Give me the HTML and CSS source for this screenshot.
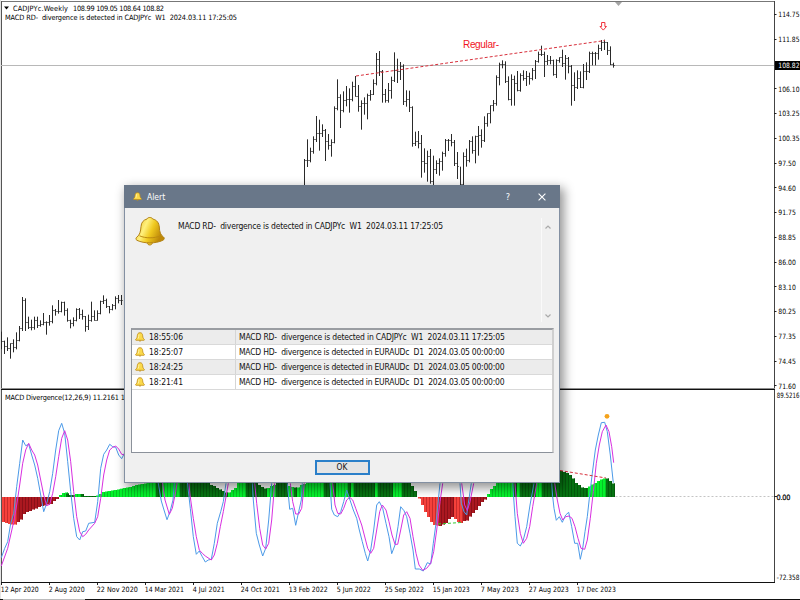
FILE: index.html
```html
<!DOCTYPE html>
<html lang="en">
<head>
<meta charset="utf-8">
<title>CADJPYc Weekly</title>
<link rel="stylesheet" href="styles.css">
</head>
<body>
<main class="terminal">
<svg class="chart" id="chart" width="800" height="600" viewBox="0 0 800 600">
  <g class="frame" shape-rendering="crispEdges">
    <rect x="0" y="0" width="1" height="600" fill="#e4e4e4"/>
    <rect x="1" y="1" width="774" height="1" fill="#777"/>
    <rect x="1" y="1" width="1" height="582" fill="#555"/>
    <rect x="774" y="1" width="1" height="582" fill="#444"/>
    <rect x="1" y="388" width="774" height="1" fill="#8f8f8f"/>
    <rect x="1" y="389" width="774" height="1" fill="#111"/>
    <rect x="1" y="582" width="774" height="1" fill="#111"/>
    <rect x="1" y="65" width="773" height="1" fill="#b8b8b8"/>
    <rect x="0" y="599" width="800" height="1" fill="#111"/>
    <rect x="3" y="599" width="82" height="1" fill="#bbb"/>
  </g>
  <path d="M615 2h7l-3.5 4z" fill="#a5a5a5"/>
  <path d="M615.500 496.500H774" stroke="#c4c4c4" stroke-dasharray="2 2"/>
  <g id="bars"></g>
  <g id="histogram"></g>
  <g id="lines"></g>
  <path class="trend" d="M356 76L605 40.500"/>
  <path class="trend" d="M560 470.500L606 478"/>
  <path d="M438 524L461 522.500" stroke="#3c3" stroke-dasharray="3 2" fill="none"/>
  <path d="M601.600 22.500h3.300v4h1.600l-3.200 3.600-3.300-3.600h1.600z" fill="#fff" stroke="#f0323c"/>
  <circle cx="607" cy="416.300" r="2.400" fill="#f5a31c"/>
  <text class="note" x="463" y="48" textLength="36">Regular-</text>
  <path d="M4 6.500h5l-2.500 3z" fill="#000"/>
  <g class="labels">
    <text x="13" y="10.500" textLength="55" xml:space="preserve">CADJPYc.Weekly</text>
    <text x="73" y="10.500" textLength="91">108.99 109.05 108.64 108.82</text>
    <text x="5" y="20.300" textLength="232" xml:space="preserve">MACD RD-  divergence is detected in CADJPYc  W1  2024.03.11 17:25:05</text>
    <text x="5" y="399.500" textLength="130">MACD Divergence(12,26,9) 11.2161 13.2</text>
    <text x="776.800" y="398" textLength="22.600" lengthAdjust="spacingAndGlyphs">89.5216</text>
    <text x="776.500" y="500" textLength="14" class="strong">0.00</text>
    <text x="776.800" y="580" textLength="22.600" lengthAdjust="spacingAndGlyphs">-72.358</text>
  </g>
  <g class="labels" id="axes"></g>
  <rect x="775" y="61" width="25" height="9" fill="#000"/>
  <text class="price" x="778.300" y="68.200" textLength="21.200" lengthAdjust="spacingAndGlyphs">108.82</text>
</svg>

<svg width="0" height="0" class="defs">
  <defs>
    <linearGradient id="gold" x1="0" x2="1" y1="0" y2=".4">
      <stop offset="0" stop-color="#e9b81b"/><stop offset=".4" stop-color="#fff07c"/><stop offset=".65" stop-color="#f0c91f"/><stop offset="1" stop-color="#bd8808"/>
    </linearGradient>
    <symbol id="bell" viewBox="0 0 30 30">
      <path d="M12.200 26.500h5.200c0 3.300-5.200 3.300-5.200 0z" fill="#efc62a" stroke="#b48312"/>
      <path d="M12 3c.7-2 5-2 5.700 0 4.300 1 6.300 4 6.600 8 .2 5 1.300 8 4.200 10 1.300 1 .8 2.600-.6 3.300-7.500 3.500-18.500 3.500-26 0-1.200-.7-1.300-2.300 0-3.200 3-2.400 3.700-5.500 4.100-10.500C6.300 6.500 8.300 4 12 3z" fill="url(#gold)" stroke="#b38214"/>
      <path d="M4.500 19.800c6 2.700 15 2.700 21 0" fill="none" stroke="#bd8a10"/>
    </symbol>
    <symbol id="bell-small" viewBox="0 0 10 10">
      <path d="M4 8.500h2c0 1.400-2 1.400-2 0z" fill="#c8920c"/>
      <path d="M5 .7C6.900.7 7.600 2 7.700 3.800 7.800 5.600 8.200 6.400 9.200 7.200c.5.600.2 1.100-.4 1.100H1.200c-.6 0-.9-.5-.4-1.100 1-.8 1.400-1.600 1.500-3.400C2.400 2 3.100.7 5 .7z" fill="#fbd94a" stroke="#bf8c16" stroke-width=".8"/>
      <path d="M4 2.500C3.700 4 3.700 5 3.200 6.500" fill="none" stroke="#fff3a8" stroke-width="1"/>
    </symbol>
  </defs>
</svg>

<section class="dialog">
  <header class="titlebar">
    <svg class="tiny-bell"><use href="#bell-small"/></svg>
    <span class="title">Alert</span>
    <span class="help">?</span>
    <svg class="close" viewBox="0 0 8 8"><path d="M.6.600l6.800 6.800M7.400.600L.6 7.400"/></svg>
  </header>
  <div class="message">
    <svg class="big-bell"><use href="#bell"/></svg>
    <p class="text lead">MACD RD-  divergence is detected in CADJPYc  W1  2024.03.11 17:25:05</p>
    <div class="scroller">
      <svg viewBox="0 0 6 4"><path d="M.5 3.500L3 1l2.500 2.500"/></svg>
      <svg viewBox="0 0 6 4"><path d="M.5.500L3 3 5.500.500"/></svg>
    </div>
  </div>
  <div class="log">
    <div class="row"><div class="time"><svg><use href="#bell-small"/></svg><span>18:55:06</span></div><div class="text wide">MACD RD-  divergence is detected in CADJPYc  W1  2024.03.11 17:25:05</div></div>
    <div class="row"><div class="time"><svg><use href="#bell-small"/></svg><span>18:25:07</span></div><div class="text">MACD HD-  divergence is detected in EURAUDc  D1  2024.03.05 00:00:00</div></div>
    <div class="row"><div class="time"><svg><use href="#bell-small"/></svg><span>18:24:25</span></div><div class="text">MACD HD-  divergence is detected in EURAUDc  D1  2024.03.05 00:00:00</div></div>
    <div class="row"><div class="time"><svg><use href="#bell-small"/></svg><span>18:21:41</span></div><div class="text">MACD HD-  divergence is detected in EURAUDc  D1  2024.03.05 00:00:00</div></div>
  </div>
  <button class="ok">OK</button>
</section>
</main>
<script src="script.js"></script>
</body>
</html>
```
FILE: styles.css
```css
* { box-sizing: border-box; }
body { margin: 0; background: #fff; font-family: "DejaVu Sans Condensed", "DejaVu Sans", sans-serif; overflow: hidden; }
.terminal { position: relative; width: 800px; height: 600px; overflow: hidden; }
.chart { display: block; }
.defs { position: absolute; }
.labels text, .price { font-family: "DejaVu Sans Condensed", "DejaVu Sans", sans-serif; font-stretch: condensed; font-size: 7.300px; fill: #000; }
.labels .strong { stroke: #000; stroke-width: .2px; }
.price { fill: #fff; }
.note { font: 10px "Liberation Sans", sans-serif; fill: #f0141e; }
.trend { fill: none; stroke: #d8303c; stroke-width: 1; stroke-dasharray: 3 2; }

.dialog { position: absolute; left: 124px; top: 185px; width: 436px; height: 298px; display: flex; flex-direction: column; background: #f0f0f0; border: 1px solid #8390a2; border-top: 0; box-shadow: 3px 4px 10px 1px rgba(0,0,0,.42); }
.titlebar { height: 23px; margin: 0 -1px; background: #697789; display: flex; flex: none; align-items: center; color: #fff; padding: 0 14px 0 9px; }
.tiny-bell { width: 9px; height: 9px; }
.title { font-size: 8.500px; font-stretch: condensed; margin-left: 5px; flex: 1; }
.help { font-size: 9px; margin-right: 28px; }
.close { width: 8px; height: 8px; fill: none; stroke: #fff; stroke-width: 1.100; }
.message { display: flex; height: 120px; flex: none; padding: 8px 0 0 10px; }
.big-bell { width: 30px; height: 30px; flex: none; }
.text, .time { font-size: 8.500px; font-stretch: condensed; line-height: 10px; white-space: pre; color: #111; letter-spacing: -.235px; }
.wide { letter-spacing: -.185px; }
.lead { margin: 5px 0 0 13px; flex: 1; letter-spacing: -.195px; }
.scroller { display: flex; flex-direction: column; justify-content: space-between; align-items: center; width: 12px; height: 104px; margin: 2px 6px 0 0; padding: 7px 0 4px; border-left: 1px solid #fafafa; }
.scroller svg { width: 6px; height: 4px; fill: none; stroke: #aaa; stroke-width: 1.200; }
.log { flex: none; height: 125px; margin: 0 5px 0 6px; background: #fff; border: 1px solid #8b919a; border-top: 2px solid #9a9da2; border-right: 2px solid #cfcfcf; }
.row { display: flex; height: 15px; border-bottom: 1px solid #d9d9d9; }
.row:nth-child(odd) { background: #ececec; }
.time { width: 104px; flex: none; display: flex; align-items: center; border-right: 1px solid #d5d5d5; padding-left: 3px; letter-spacing: -.05px; }
.time svg { width: 10px; height: 10px; margin-right: 4px; }
.row .text { padding: 2px 0 0 3px; }
.ok { align-self: center; margin: 7px 0 0; width: 55px; height: 15px; padding: 0; border: 2px solid #2a7fc9; background: #e4e4e4; color: #111; font: 8.300px/11px "DejaVu Sans Condensed", "DejaVu Sans", sans-serif; }
```
FILE: script.js
```js
const NS = 'http://www.w3.org/2000/svg';
function add(parent, tag, attrs, text) {
  const el = document.createElementNS(NS, tag);
  for (const key in attrs) el.setAttribute(key, attrs[key]);
  if (text) el.textContent = text;
  document.getElementById(parent).appendChild(el);
}

// Price series: first bar index, vertical origin, then high/low/close in thirds of a pixel.
const prices = [
  [0, 280, '155 207 185,182 222 200,172 213 205,190 236 190,178 217 203,157 208 182,138 184 145,51 153 60,55 153 127,110 147 142,119 151 142,110 149 120,110 144 135,121 140 133,99 136 128,124 164 128,105 137 125,76 130 90,87 107 93,60 101 93,65 97 68,65 107 90,85 125 122,119 145 130,112 139 122,85 124 88,84 117 103,89 119 110,108 155 140,104 150 120,65 125 108,91 122 120,91 122 100,62 103 65,46 72 62,56 84 80,78 100 88,72 91 76,49 88 55,45 70 60,45 75 60'],
  [101, 40, '357 440 360,298 381 360,323 367 335,289 341 298,228 306 280,239 332 280,253 291 270,267 363 304,282 329 316,298 350 308,199 310 205,118 211 173,163 264 211,154 217 181,138 199 178,145 218 178,125 184 138,108 170 170,135 215 199,181 269 190,172 224 190,161 238 165,150 182 163,118 165 130,39 136 58,33 108 95,90 188 163,147 188 180,129 188 150,110 176 120,37 126 90,56 129 93,66 120 80,73 195 184,151 200 178,152 216 202,199 320 310,275 318 303,273 325 310,285 413 364,325 398 370,332 425 350,327 431 425,347 435 388,361 402 370,355 407 365,335 392 340,297 350 300,297 333 300,282 319 307,300 378 370,336 417 380'],
  [153, 0, '500 555 552,457 555 470,446 500 482,420 487 425,409 461 452,407 490 410,378 467 405,388 443 420,349 426 370,340 380 340,316 370 316,300 334 310,226 317 232,188 256 192,181 205 193,184 249 245,229 301 298,223 317 238,227 317 250,213 274 270,220 275 225,211 242 235,213 258 230,218 254 235,204 241 210,180 237 185,155 188 162,137 168 163,155 231 185,165 195 182,168 193 182,179 227 223,178 234 181,172 188 172,149 201 190,165 239 175,171 220 200,195 317 255,217 303 262,211 267 235,214 264 262,192 265 215,187 240 215,155 219 160,155 196 160,156 196 160,134 179 145,120 153 127,119 150 127,126 165 150,139 195 193,188 203 196']
];
for (const [start, origin, data] of prices) {
  let last = null;
  data.split(',').forEach((row, i) => {
    const [hi, lo, close] = row.split(' ').map(v => origin + v / 3);
    const x = 1.5 + 3 * (start + i);
    add('bars', 'path', { d: `M${x} ${hi}V${lo}`, stroke: '#2a2a2a', 'stroke-width': 1 });
    let d = `M${x} ${Math.floor(close) + .5}h1.5`;
    if (last) d += `M${x} ${Math.floor(last) + .5}h-1.5`;
    add('bars', 'path', { d, stroke: '#222', 'stroke-opacity': .6 });
    last = close;
  });
}

// Histogram: [first x, colour, values above (+) or below (-) zero], one value per 3px bar.
const shade = { L: ['#04f22c', '#06c424'], D: ['#067312', '#045a0c'], r: ['#f5413b', '#c92c2c'], d: ['#ab1820', '#8a1018'] };
const rep = (n, v) => Array(n).fill(v);
const histogram = [
  [2, 'r', [-25, -26, -27, -27.5, -27.5]],
  [17, 'd', [-25, -22.5, -17, -15, -14, -12.5, -11.5, -10, -9, -8.5, -7.5, -7, -4, -2]],
  [59, 'L', [2, 4, 4.5]], [66, 'D', [3.5, 2, 2]], [75, 'L', [3, 3]], [81, 'D', [3, 1, 1, 1, 1]],
  [96, 'L', [1.5, 3, 5, 5.5, 6, 6.5, 7, 7.5, 8.3, 9, 9.5, 10, 11, 12, 12.5, 13, 13.5, 14, 14, 14]],
  [156, 'D', [14, 14]], [162, 'L', rep(6, 14)], [180, 'D', [...rep(10, 14), 12, 11, 9, 7.5, 6, 4.5]],
  [228, 'L', [4.5, 7, 9, 14, 14, 14]], [246, 'D', [14, 14, 14, 14, 12, 10, 8.5]], [267, 'L', [9, 11, 12]],
  [276, 'D', rep(4, 14)], [288, 'L', [11, 10]], [294, 'D', [9.5]], [297, 'L', [9.5, 12, 13, ...rep(9, 14)]],
  [324, 'D', rep(2, 14)], [330, 'L', rep(1, 14)], [333, 'D', [14]], [336, 'L', rep(4, 14)], [348, 'D', [14]],
  [351, 'L', [14]], [354, 'D', rep(7, 14)], [375, 'L', [14]], [378, 'D', rep(5, 14)], [393, 'L', rep(3, 14)],
  [402, 'D', [14, 14, 14, 11, 6]],
  [418, 'r', [-1.5, -8, -15, -20, -25, -28, -28.5]], [439, 'd', [-29, -27.5, -26, -22, -20]], [454, 'r', [-22, -25, -26]],
  [463, 'd', [-24, -23.5, -19.5, -16, -13, -9, -5, -2.5]],
  [487, 'L', [3, 8, 11, ...rep(9, 14)]], [514, 'D', [14]], [517, 'L', [14]], [520, 'D', rep(6, 14)],
  [536, 'L', rep(2, 14)], [542, 'D', [...rep(5, 14), 26, 26, 25, 24, 22, 18.5, 14, 12, 9.5, 9, 9]],
  [588, 'L', [10.5, 12.5, 14, 16, 17.5, 18.5]], [606, 'D', [18.5, 16, 13.5]]
];
for (const [x0, tone, values] of histogram) {
  values.forEach((v, i) => {
    const x = x0 + 3 * i, y = v > 0 ? 497 - v : 497, height = Math.abs(v);
    add('histogram', 'rect', { x, y, width: 3, height, fill: shade[tone][0] });
    add('histogram', 'rect', { x: x + 2, y, width: 1, height, fill: shade[tone][1] });
  });
}

// Oscillator and signal: origin x/y, then points in thirds of a pixel.
const blue = '#4b9ae8', pink = '#d82fe0';
const curves = [
  [0, 385, blue, '4,518 14,490 23,470 32,415 41,385 50,305 59,235 68,165 77,182 86,178 95,210 104,240 113,280 122,330 131,380 140,355 149,320 158,265 167,195 176,137 185,115 194,145 203,230 212,320 221,400 230,455 239,465 248,440 257,438 266,415 284,412 293,350 302,250 311,208 320,195 329,178 338,185 347,187 356,210 365,221 374,203'],
  [0, 385, pink, '4,543 23,490 41,410 50,360 59,300 68,235 77,195 86,175 95,195 104,210 113,240 122,285 131,330 140,362 149,358 158,325 167,275 176,215 185,160 194,137 203,165 212,230 221,320 230,395 239,440 248,455 257,448 266,435 284,415 293,395 302,340 311,270 320,225 329,195 338,187 347,183 356,192 365,208 374,210'],
  [0, 385, blue, '474,290 484,348 492,375 501,404 510,380 519,345 523,290'],
  [0, 385, pink, '487,290 495,345 508,388 517,370 527,320 532,290'],
  [0, 385, blue, '562,290 571,370 580,455 589,508'],
  [190, 440, blue, '19,343 28,333 37,350 46,366 55,360 64,358 73,310 82,250 92,215 100,185 108,130'],
  [190, 440, pink, '-3,130 0,165 10,235 19,290 28,330 37,340 46,348 64,360 73,345 82,310 91,260 100,215 108,170 115,130'],
  [190, 440, blue, '187,130 190,180 199,280 208,315 218,348 227,325 236,240 245,130'],
  [190, 440, pink, '194,130 200,190 209,265 218,315 227,327 236,310 245,240 254,130'],
  [190, 440, blue, '292,130 299,208 308,205 317,256 326,215 334,180 337,130'],
  [190, 440, pink, '301,130 308,185 317,222 326,222 335,205 343,130'],
  [190, 440, blue, '420,130 425,208 433,225 443,230 452,215 461,185 470,150 480,180 490,210 500,235 508,270 517,305 526,340 533,363 542,330 551,270 560,195 568,185 578,205 588,250 597,290 605,341 615,315 624,260 632,200 642,212 650,230 660,280 669,330 676,387 688,387 700,393 712,368 722,372 730,310 738,250 750,130'],
  [190, 440, pink, '428,130 435,195 443,220 452,222 461,205 470,180 479,172 488,180 497,205 515,255 533,325 542,340 551,325 560,270 569,215 577,195 588,210 597,245 606,285 615,313 623,313 632,270 641,225 650,215 660,235 669,290 678,340 687,375 698,391 710,385 722,370 731,335 740,270 750,185 758,130'],
  [380, 440, blue, '240,130 244,190 252,215 260,225 265,190 274,130'],
  [380, 440, pink, '245,130 254,195 262,212 270,185 281,130'],
  [380, 440, blue, '398,130 405,230 412,310 421,318 430,300 440,260 450,195 462,130'],
  [380, 440, pink, '405,130 412,220 421,280 430,310 440,295 449,260 458,200 470,130'],
  [550, 380, blue, '5,310 8,350 12,385 19,421 28,410 37,427 47,405 56,397 65,440 74,490 83,490 91,538 98,505 105,455 112,410 119,345 127,280 136,210 145,165 154,128 164,127 172,155 181,225 190,308'],
  [550, 380, pink, '14,310 22,360 30,400 38,420 47,410 57,408 66,415 75,440 84,475 93,505 104,508 112,480 121,415 130,335 139,250 148,195 157,155 168,135 177,155 185,200 191,248']
];
for (const [ox, oy, stroke, data] of curves) {
  const points = data.split(' ').map(p => {
    const [x, y] = p.split(',');
    return `${(ox + x / 3).toFixed(1)},${(oy + y / 3).toFixed(1)}`;
  }).join(' ');
  add('lines', 'polyline', { points, fill: 'none', stroke, 'stroke-width': 1 });
}

// Price scale
['114.75', '111.85', '', '106.10', '103.25', '100.35', '97.50', '94.60', '91.75', '88.85', '86.00', '83.10', '80.25', '77.35', '74.45', '71.60'].forEach((label, i) => {
  if (!label) return;
  const y = 14.7 + 24.75 * i;
  add('axes', 'path', { d: `M774 ${Math.floor(y) + .5}h2.500`, stroke: '#222' });
  add('axes', 'text', { x: 778.3, y: y + 2.7, textLength: label.length > 5 ? 21.2 : 17.5, lengthAdjust: 'spacingAndGlyphs' }, label);
});
add('axes', 'path', { d: 'M774 496.500h3', stroke: '#222' });

// Time scale
[['12 Apr 2020', 38], ['2 Aug 2020', 36], ['22 Nov 2020', 41], ['14 Mar 2021', 39], ['4 Jul 2021', 32], ['24 Oct 2021', 39], ['13 Feb 2022', 39], ['5 Jun 2022', 34], ['25 Sep 2022', 39], ['15 Jan 2023', 37], ['7 May 2023', 38], ['27 Aug 2023', 40], ['17 Dec 2023', 39]].forEach(([label, textLength], i) => {
  add('axes', 'path', { d: `M${1.5 + 48 * i} 583v2`, stroke: '#222' });
  add('axes', 'text', { x: .8 + 48 * i, y: 591.8, textLength, lengthAdjust: 'spacingAndGlyphs' }, label);
});
```
